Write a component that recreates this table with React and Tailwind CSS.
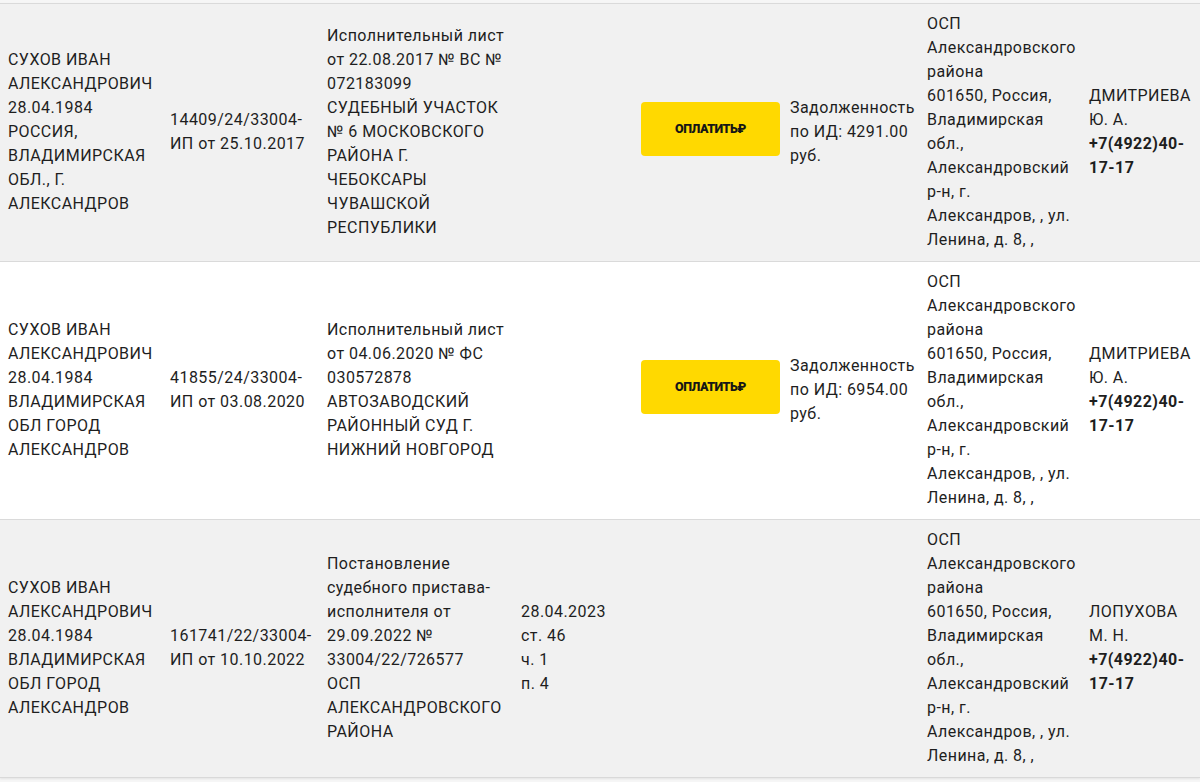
import React from "react";

const rows = [
  {
    bg: "bg-[#f1f1f1]",
    c1: ["СУХОВ ИВАН", "АЛЕКСАНДРОВИЧ", "28.04.1984", "РОССИЯ,", "ВЛАДИМИРСКАЯ", "ОБЛ., Г.", "АЛЕКСАНДРОВ"],
    c2: ["14409/24/33004-", "ИП от 25.10.2017"],
    c3: ["Исполнительный лист", "от 22.08.2017 № ВС №", "072183099", "СУДЕБНЫЙ УЧАСТОК", "№ 6 МОСКОВСКОГО", "РАЙОНА Г.", "ЧЕБОКСАРЫ", "ЧУВАШСКОЙ", "РЕСПУБЛИКИ"],
    c4: [],
    pay: true,
    c6: ["Задолженность", "по ИД: 4291.00", "руб."],
    c8: ["ДМИТРИЕВА", "Ю. А."],
  },
  {
    bg: "bg-white",
    c1: ["СУХОВ ИВАН", "АЛЕКСАНДРОВИЧ", "28.04.1984", "ВЛАДИМИРСКАЯ", "ОБЛ ГОРОД", "АЛЕКСАНДРОВ"],
    c2: ["41855/24/33004-", "ИП от 03.08.2020"],
    c3: ["Исполнительный лист", "от 04.06.2020 № ФС", "030572878", "АВТОЗАВОДСКИЙ", "РАЙОННЫЙ СУД Г.", "НИЖНИЙ НОВГОРОД"],
    c4: [],
    pay: true,
    c6: ["Задолженность", "по ИД: 6954.00", "руб."],
    c8: ["ДМИТРИЕВА", "Ю. А."],
  },
  {
    bg: "bg-[#f1f1f1]",
    c1: ["СУХОВ ИВАН", "АЛЕКСАНДРОВИЧ", "28.04.1984", "ВЛАДИМИРСКАЯ", "ОБЛ ГОРОД", "АЛЕКСАНДРОВ"],
    c2: ["161741/22/33004-", "ИП от 10.10.2022"],
    c3: ["Постановление", "судебного пристава-", "исполнителя от", "29.09.2022 №", "33004/22/726577", "ОСП", "АЛЕКСАНДРОВСКОГО", "РАЙОНА"],
    c4: ["28.04.2023", "ст. 46", "ч. 1", "п. 4"],
    pay: false,
    c6: [],
    c8: ["ЛОПУХОВА", "М. Н."],
  },
];

const osp = ["ОСП", "Александровского", "района", "601650, Россия,", "Владимирская", "обл.,", "Александровский", "р-н, г.", "Александров, , ул.", "Ленина, д. 8, ,"];

function Lines({ lines }) {
  return (
    <div className="flex flex-col">
      {lines.map((l, i) => (
        <span key={i} className="whitespace-nowrap">{l}</span>
      ))}
    </div>
  );
}

function Cell({ children, className = "" }) {
  return <div className={"flex items-center pl-2 " + className}>{children}</div>;
}

export default function App() {
  return (
    <div
      className="w-[1200px] h-[782px] overflow-hidden bg-[#f6f6f6] pt-[3px] text-[16px] leading-[24px] text-[#1e1e1e] tracking-[0.45px]"
      style={{ fontFamily: "Roboto, 'Noto Sans', sans-serif" }}
    >
      <div className="border-b border-[#d9d9d9] shadow-[0_1px_2px_rgba(0,0,0,0.08)]">
        {rows.map((r, idx) => (
          <div
            key={idx}
            className={
              "grid grid-cols-[162px_157px_194px_120px_149px_137px_162px_119px] border-t border-[#dadada] pt-2 pb-[9px] " +
              r.bg
            }
          >
            <Cell><Lines lines={r.c1} /></Cell>
            <Cell><Lines lines={r.c2} /></Cell>
            <Cell><Lines lines={r.c3} /></Cell>
            <Cell><Lines lines={r.c4} /></Cell>
            <Cell>
              {r.pay && (
                <button
                  className="mb-[6px] w-[139px] h-[54px] rounded-[4px] bg-[#ffd900] flex items-center justify-center text-[12.5px] font-black tracking-[-0.5px] text-[#161616]"
                  style={{ fontFamily: "Roboto, sans-serif" }}
                >
                  ОПЛАТИТЬ₽
                </button>
              )}
            </Cell>
            <Cell><Lines lines={r.c6} /></Cell>
            <Cell><Lines lines={osp} /></Cell>
            <Cell>
              <div className="flex flex-col">
                <Lines lines={r.c8} />
                <span className="whitespace-nowrap font-bold">+7(4922)40-</span>
                <span className="whitespace-nowrap font-bold">17-17</span>
              </div>
            </Cell>
          </div>
        ))}
      </div>
    </div>
  );
}
